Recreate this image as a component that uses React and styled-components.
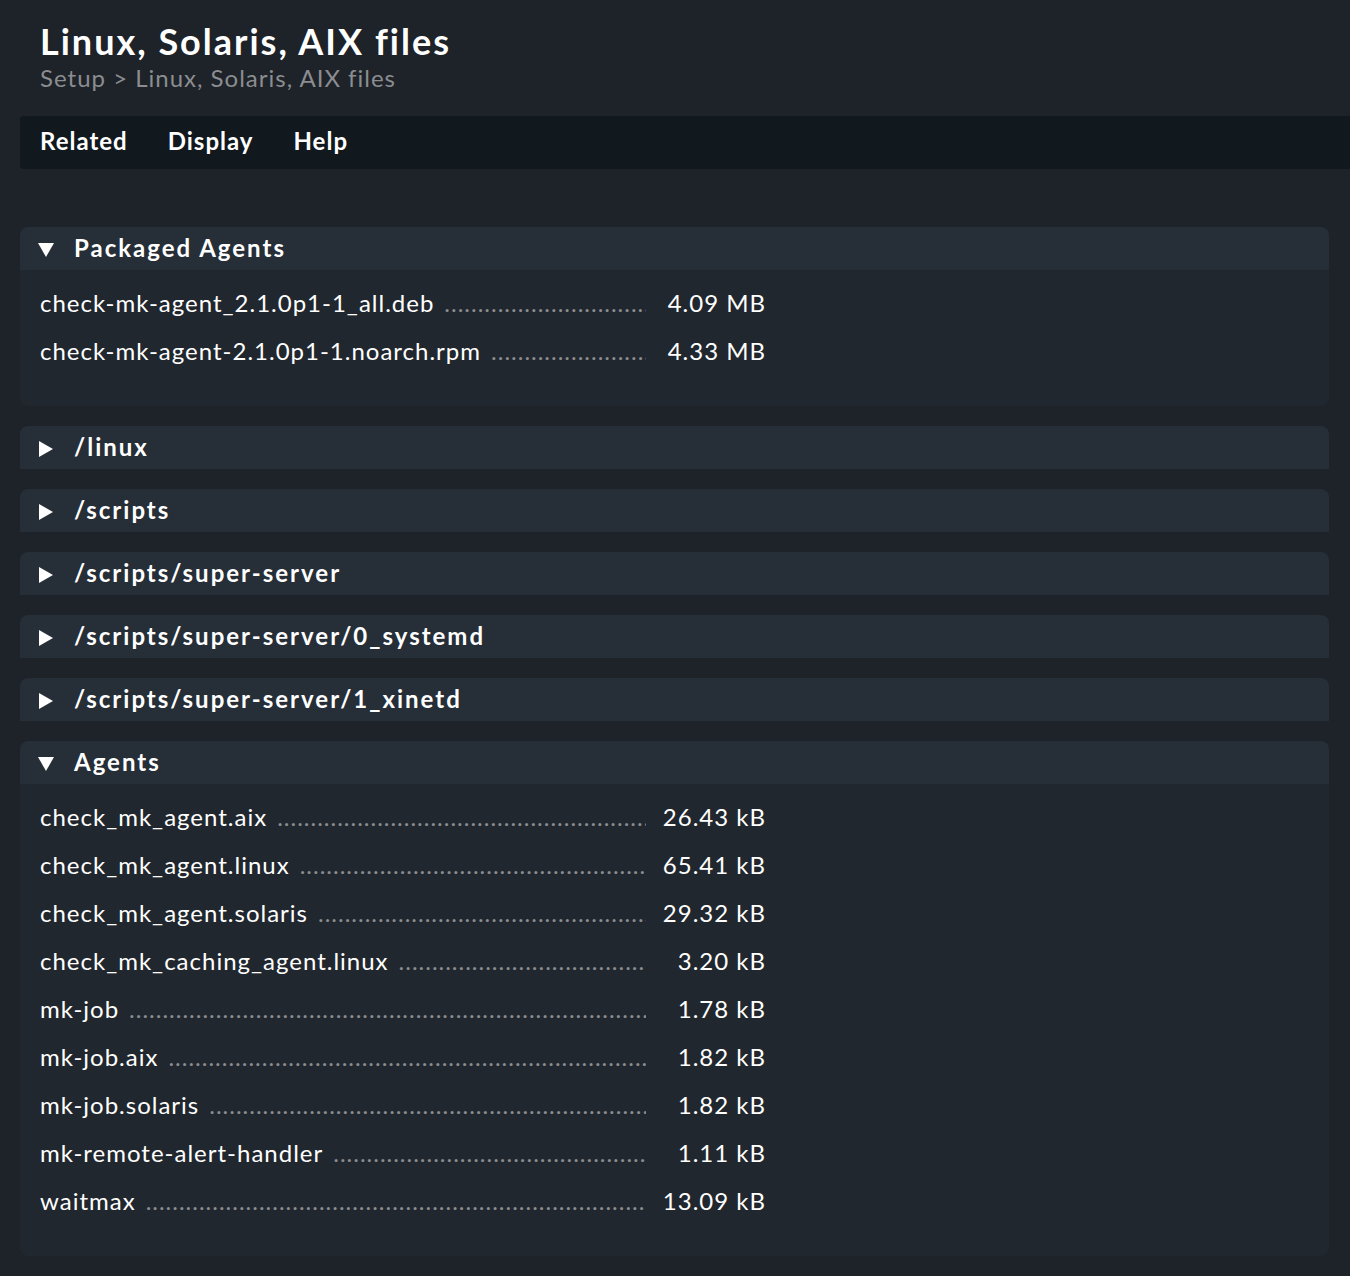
import React, { useState } from 'react'
import styled, { createGlobalStyle } from 'styled-components'

const sections = [
  {
    title: 'Packaged Agents',
    open: true,
    files: [
      { name: 'check-mk-agent_2.1.0p1-1_all.deb', size: '4.09 MB' },
      { name: 'check-mk-agent-2.1.0p1-1.noarch.rpm', size: '4.33 MB' },
    ],
  },
  { title: '/linux', files: [] },
  { title: '/scripts', files: [] },
  { title: '/scripts/super-server', files: [] },
  { title: '/scripts/super-server/0_systemd', files: [] },
  { title: '/scripts/super-server/1_xinetd', files: [] },
  {
    title: 'Agents',
    open: true,
    files: [
      { name: 'check_mk_agent.aix', size: '26.43 kB' },
      { name: 'check_mk_agent.linux', size: '65.41 kB' },
      { name: 'check_mk_agent.solaris', size: '29.32 kB' },
      { name: 'check_mk_caching_agent.linux', size: '3.20 kB' },
      { name: 'mk-job', size: '1.78 kB' },
      { name: 'mk-job.aix', size: '1.82 kB' },
      { name: 'mk-job.solaris', size: '1.82 kB' },
      { name: 'mk-remote-alert-handler', size: '1.11 kB' },
      { name: 'waitmax', size: '13.09 kB' },
    ],
  },
]

const Section = ({ title, open = false, files }) => {
  const [isOpen, setIsOpen] = useState(open)

  return (
    <section>
      <PanelTitle>
        <Toggle type='button' aria-expanded={isOpen} onClick={() => setIsOpen(!isOpen)}>
          <Arrow viewBox='0 0 16 16' $open={isOpen} aria-hidden='true'>
            <path d='M1 0 L15 8 L1 16 Z' />
          </Arrow>
          {title}
        </Toggle>
      </PanelTitle>
      {isOpen && (
        <Files>
          {files.map((file) => (
            <File key={file.name}>
              <FileLink href={'#' + file.name}>{file.name}</FileLink>
              <Size>{file.size}</Size>
            </File>
          ))}
        </Files>
      )}
    </section>
  )
}

const App = () => {
  return (
    <>
      <GlobalStyle />
      <Header>
        <Title>Linux, Solaris, AIX files</Title>
        <Breadcrumb aria-label='Breadcrumb'>
          <a href='#setup'>Setup</a> &gt; <a href='#files'>Linux, Solaris, AIX files</a>
        </Breadcrumb>
      </Header>
      <MenuBar>
        <MenuButton type='button'>Related</MenuButton>
        <MenuButton type='button'>Display</MenuButton>
        <MenuButton type='button'>Help</MenuButton>
      </MenuBar>
      <Content>
        {sections.map((section) => (
          <Section key={section.title} {...section} />
        ))}
      </Content>
    </>
  )
}

export default App

const GlobalStyle = createGlobalStyle`
  * {
    box-sizing: border-box;
  }
  body {
    margin: 0;
    background-color: #1e2229;
    color: #ffffff;
    font-family: Lato, sans-serif;
    font-size: 24px;
    line-height: 28px;
    letter-spacing: 1px;
  }
  a {
    color: inherit;
    text-decoration: none;
  }
  button {
    border: 0;
    padding: 0;
    background: none;
    color: inherit;
    font: inherit;
    cursor: pointer;
  }
`
const Header = styled.header`
  padding: 18px 40px 24px;
`
const Title = styled.h1`
  margin: 0;
  font-size: 36px;
  font-weight: 700;
  line-height: 46px;
  letter-spacing: 2px;
`
const Breadcrumb = styled.nav`
  color: #8b8d90;
`
const MenuBar = styled.nav`
  display: flex;
  gap: 40px;
  height: 53px;
  margin-left: 20px;
  padding: 0 20px 4px;
  border-radius: 4px 0 0 4px;
  background-color: #11181e;
`
const MenuButton = styled.button`
  && {
    font-weight: 700;
    letter-spacing: 1px;
  }
`
const Content = styled.main`
  display: flex;
  flex-direction: column;
  gap: 20px;
  padding: 58px 21px 20px 20px;
`
const PanelTitle = styled.h2`
  margin: 0;
  font-size: 24px;
  font-weight: 700;
`
const Toggle = styled.button`
  && {
    display: flex;
    align-items: center;
    gap: 20px;
    width: 100%;
    height: 43px;
    padding: 0 18px 2px;
    border-radius: 8px 8px 0 0;
    background-color: #262e37;
    letter-spacing: 2px;
    text-align: left;
  }
`
const Arrow = styled.svg`
  width: 16px;
  height: 16px;
  margin-top: 5px;
  fill: #ffffff;
  transform: ${({ $open }) => ($open ? 'rotate(90deg)' : 'none')};
`
const Files = styled.ul`
  margin: 0;
  padding: 9px 20px 31px;
  border-radius: 0 0 8px 8px;
  background-color: #21272e;
  list-style: none;
`
const File = styled.li`
  display: flex;
  align-items: center;
  max-width: 726px;
  height: 48px;
`
const FileLink = styled.a`
  display: flex;
  flex: 1;
  gap: 10px;
  min-width: 0;
  white-space: nowrap;

  /* dotted leader up to the size column */
  &::after {
    content: '${'.'.repeat(100)}';
    flex: 1;
    overflow: hidden;
    color: #8b8d90;
  }
`
const Size = styled.span`
  flex: none;
  width: 120px;
  text-align: right;
`
